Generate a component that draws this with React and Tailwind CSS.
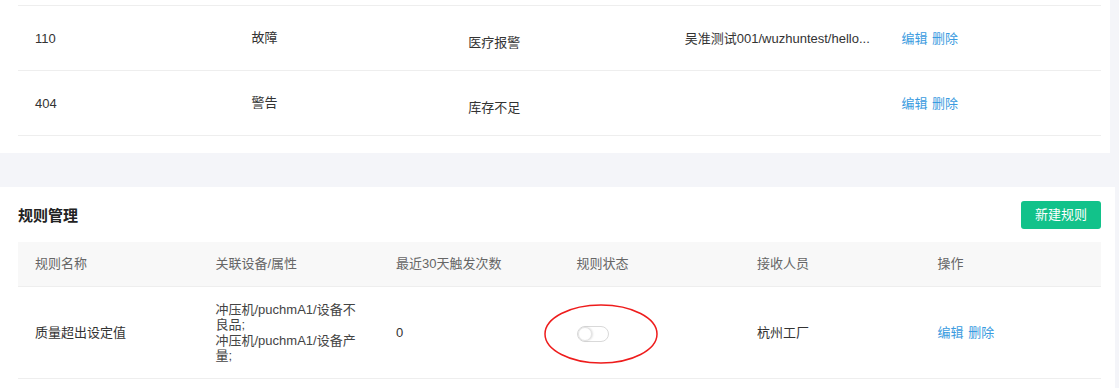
import React from 'react';

const font = { fontFamily: '"Liberation Sans", "Noto Sans CJK SC", sans-serif' };

const alarms = [
    { code: '110', level: '故障', type: '医疗报警', device: '吴准测试001/wuzhuntest/hello...' },
    { code: '404', level: '警告', type: '库存不足', device: '' },
];

const Actions = () => (
    <span className="text-[#3a9be0]">
        编辑 <span className="ml-[1px]">删除</span>
    </span>
);

const App = () => {
    return (
        <div className="bg-[#f4f5f9] w-[1119px] h-[388px] overflow-hidden text-[13px] text-[#333]" style={font}>
            {/* alarm list card */}
            <div className="bg-white w-[1110px] h-[153px] pt-[5px] px-[18px] pr-[9px]">
                <div className="border-t border-[#eeeeee]">
                    {alarms.map((a) => (
                        <div key={a.code} className="grid grid-cols-5 h-[65px] border-b border-[#eeeeee]">
                            <div className="pl-[17px] pt-[23px]">{a.code}</div>
                            <div className="pl-[17px] pt-[22px]">{a.level}</div>
                            <div className="pl-[17px] pt-[27px]">{a.type}</div>
                            <div className="pl-[17px] pt-[23px] whitespace-nowrap">{a.device}</div>
                            <div className="pl-[17px] pt-[23px]"><Actions /></div>
                        </div>
                    ))}
                </div>
            </div>

            {/* rule management card */}
            <div className="bg-white w-[1115px] h-[201px] mt-[34px] px-[18px] pr-[14px]">
                <div className="flex items-center justify-between h-[55px]">
                    <h2 className="text-[15px] font-bold text-[#222] pt-[3px]">规则管理</h2>
                    <button className="w-[80px] h-[28px] rounded-[3px] bg-[#12c28a] text-white text-[13px]">新建规则</button>
                </div>
                <div>
                    <div className="grid grid-cols-6 h-[45px] items-center bg-[#f8f8f8] border-b border-[#eeeeee] text-[#666]">
                        <div className="pl-[17px]">规则名称</div>
                        <div className="pl-[17px]">关联设备/属性</div>
                        <div className="pl-[17px]">最近30天触发次数</div>
                        <div className="pl-[17px]">规则状态</div>
                        <div className="pl-[17px]">接收人员</div>
                        <div className="pl-[17px]">操作</div>
                    </div>
                    <div className="grid grid-cols-6 h-[92px] items-center border-b border-[#eeeeee]">
                        <div className="pl-[17px]">质量超出设定值</div>
                        <div className="pl-[17px] pr-[20px] leading-[15.5px] text-[#444]">
                            冲压机/puchmA1/设备不良品;
                            <br />
                            冲压机/puchmA1/设备产量;
                        </div>
                        <div className="pl-[17px]">0</div>
                        <div className="pl-[17px] relative">
                            <div className="relative w-[32px] h-[16px] rounded-full border border-[#d9d9d9] bg-white mt-[2px]">
                                <div className="absolute left-0 top-0 w-[14px] h-[14px] rounded-full bg-white border border-[#e3e3e3] shadow-[1px_0_2px_rgba(0,0,0,0.12)]" />
                            </div>
                            <svg className="absolute left-[-17px] top-[-21px]" width="116" height="62" viewBox="0 0 116 62">
                                <ellipse cx="58" cy="31" rx="56" ry="29" fill="none" stroke="#ee1c1c" strokeWidth="1.5" />
                            </svg>
                        </div>
                        <div className="pl-[17px]">杭州工厂</div>
                        <div className="pl-[17px]"><Actions /></div>
                    </div>
                </div>
            </div>
        </div>
    );
};

export default App;
